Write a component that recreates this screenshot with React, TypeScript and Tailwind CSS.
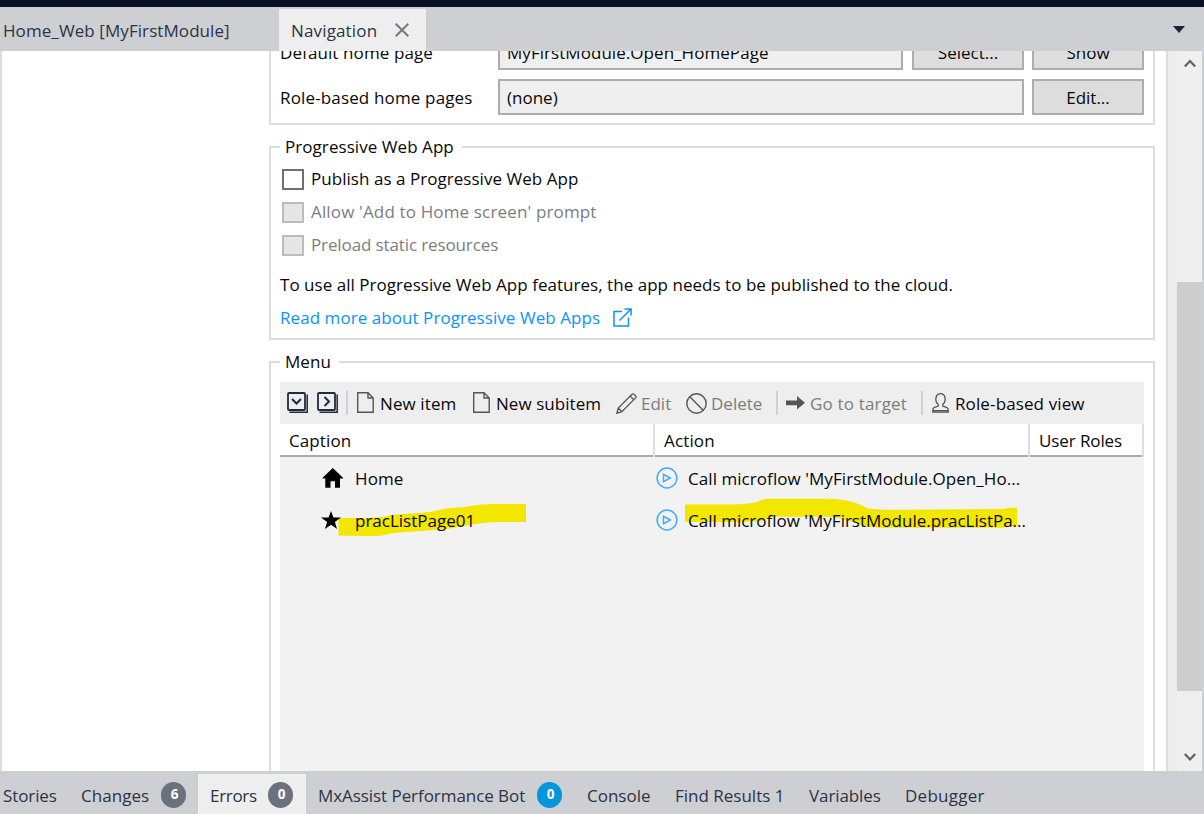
import type { ReactNode } from 'react';

interface GroupBoxProps {
  title?: string;
  className?: string;
  children: ReactNode;
}

function GroupBox({ title, className = '', children }: GroupBoxProps) {
  return (
    <section className={`border-2 border-[#dcdcdc] px-[9px] ${className}`}>
      {title && (
        <h2 className="-mt-[15px] h-[28px] w-fit bg-white pl-[5px] pr-[8px] leading-[28px] tracking-[0.06px]">{title}</h2>
      )}
      {children}
    </section>
  );
}

function Field({ className, children }: { className: string; children: ReactNode }) {
  return (
    <div className={`h-9 border-2 border-[#abadb3] bg-[#efefef] pl-[7px] leading-[34px] ${className}`}>
      {children}
    </div>
  );
}

function PushButton({ children }: { children: ReactNode }) {
  return (
    <button className="h-9 w-28 border-2 border-[#adadad] bg-[#dddddd] pt-px leading-[32px]">{children}</button>
  );
}

function CheckRow({ label, disabled, className = '' }: { label: string; disabled?: boolean; className?: string }) {
  return (
    <label className={`flex h-[33px] items-center pl-[2px] ${disabled ? 'text-[#7d7d7d]' : ''}`}>
      <span
        className={`mr-[7px] h-[21px] w-[22px] border-2 ${
          disabled ? 'border-[#bcbcbc] bg-[#e6e6e6]' : 'border-[#707070] bg-white'
        }`}
      />
      <span className={`-mt-px ${className}`}>{label}</span>
    </label>
  );
}

function StackIcon({ d }: { d: string }) {
  return (
    <svg width="22" height="22" viewBox="0 0 22 22" fill="none" stroke="#222b3d">
      <rect x="1" y="1" width="17" height="17" rx="1" strokeWidth="1.8" />
      <path d="M20.2 2.5V20.2H2.5" strokeWidth="1.5" />
      <path d={d} strokeWidth="2" />
    </svg>
  );
}

function PageIcon() {
  return (
    <svg className="-mt-px" width="17" height="21" viewBox="0 0 17 21" fill="none" stroke="#555" strokeWidth="1.4">
      <path d="M.7.7H11L16.2 6V20.3H.7ZM11 .7V6H16.2" />
    </svg>
  );
}

function PlayIcon() {
  return (
    <svg className="-mt-[2px] shrink-0" width="22" height="22" viewBox="0 0 22 22" fill="none" stroke="#41adf7">
      <circle cx="11" cy="11" r="9.9" strokeWidth="1.5" />
      <path d="M7.5 7.3V14.7L14.3 11Z" strokeWidth="1.5" />
    </svg>
  );
}

function Badge({ count, className }: { count: number; className: string }) {
  return (
    <span
      className={`-mt-[2px] flex h-[26px] w-[25px] items-center justify-center rounded-full pb-px pl-[2px] text-[13.5px] font-bold text-white ${className}`}
    >
      {count}
    </span>
  );
}

function Separator() {
  return <span className="h-6 w-[2px] bg-[#cfd0d4]" />;
}

function TabBar() {
  return (
    <header className="flex h-11 items-end bg-[#cecfd3] text-[#2c3344]">
      <div className="h-[42px] w-[279px] pl-[3px] leading-[43px] tracking-[0.08px]">Home_Web [MyFirstModule]</div>
      <div className="flex h-[42px] w-[147px] items-center bg-[#eeeeee] pl-3">
        <span className="mt-[2px] w-[104px] tracking-[0.15px]">Navigation</span>
        <svg width="14" height="14" viewBox="0 0 14 14" stroke="#747983" strokeWidth="2">
          <path d="M.7.7 13.3 13.3M13.3.7.7 13.3" />
        </svg>
      </div>
      <svg className="mb-[18px] ml-auto mr-[19px]" width="12" height="7" viewBox="0 0 12 7">
        <path d="M0 0H12L6 7Z" fill="#1c2436" />
      </svg>
    </header>
  );
}

function MenuToolbar() {
  return (
    <div className="flex h-[42px] items-center bg-[#eeeeee] pl-[7px]">
      <StackIcon d="M5 7 9.5 11.5 14 7" />
      <span className="w-2" />
      <StackIcon d="M7.5 5 12 9.5 7.5 14" />
      <span className="w-[7px]" />
      <Separator />
      <div className="ml-[9px] flex w-[116px] items-center gap-[6px]">
        <PageIcon />
        <span className="mt-[2px] tracking-[0.1px]">New item</span>
      </div>
      <div className="flex w-[143px] items-center gap-[6px]">
        <PageIcon />
        <span className="mt-[2px] tracking-[0.05px]">New subitem</span>
      </div>
      <div className="flex w-[70px] items-center gap-[4px] text-[#7d7d7d]">
        <svg width="21" height="21" viewBox="0 0 21 21" fill="none" stroke="#555" strokeWidth="1.3">
          <path d="M.8 20.2 2.3 15 16 1.3Q17 .4 18 1.3L19.6 2.9Q20.5 3.9 19.6 4.9L5.9 18.6ZM14.2 3.1 17.8 6.7M2.3 15 5.9 18.6" />
        </svg>
        <span className="mt-[2px]">Edit</span>
      </div>
      <div className="flex w-[90px] items-center gap-[4px] text-[#7d7d7d]">
        <svg width="21" height="21" viewBox="0 0 21 21" fill="none" stroke="#555" strokeWidth="1.4">
          <circle cx="10.5" cy="10.5" r="9.7" />
          <path d="M3.6 3.6 17.4 17.4" />
        </svg>
        <span className="mt-[2px]">Delete</span>
      </div>
      <Separator />
      <div className="ml-[8px] flex w-[135px] items-center gap-[5px] text-[#7d7d7d]">
        <svg width="19" height="14" viewBox="0 0 19 14" fill="#555">
          <path d="M0 4.5H11V0L19 6.7 11 13.5V9.2H0Z" />
        </svg>
        <span className="mt-[2px] whitespace-nowrap tracking-[0.17px]">Go to target</span>
      </div>
      <Separator />
      <div className="ml-[9px] flex items-center gap-[6px]">
        <svg className="-mt-px" width="17" height="20" viewBox="0 0 17 20" fill="none" stroke="#555" strokeWidth="1.3">
          <path d="M6.2 11.3C2.4 8 3.3.7 8.5.7S14.6 8 10.8 11.3V13L15 14.6Q16.2 15.2 16.2 17V19.2H.8V17Q.8 15.2 2 14.6L6.2 13ZM.8 17.6H16.2" />
        </svg>
        <span className="mt-[2px] tracking-[0.12px]">Role-based view</span>
      </div>
    </div>
  );
}

function MenuTable() {
  return (
    <>
      <div className="flex h-[33px] gap-[2px] bg-[#dedede] pr-[2px] leading-[33px]">
        <div className="w-[373px] border-b-2 border-[#ababab] bg-white pl-[9px] tracking-[0.1px]">Caption</div>
        <div className="w-[373px] border-b-2 border-[#ababab] bg-white pl-[9px] tracking-[0.15px]">Action</div>
        <div className="w-[112px] border-b-2 border-[#ababab] bg-white pl-[9px] tracking-[-0.1px]">User Roles</div>
      </div>
      <div className="relative isolate h-[400px] bg-[#f2f2f2] pt-px">
        {/* highlighter strokes under the second row */}
        <svg className="absolute left-0 top-0 -z-10" width="864" height="100" viewBox="280 457 864 100" fill="#f3e600">
          <path d="M338.5 518H366Q381 518 391 515L425 512.5Q437 511 445 508.5L465 507Q479 504 493 504H526V522H498Q484 522 471 524.5Q450 529 435 530L400 532.5Q390 533 385 535Q380 536 370 536L338.5 535.5Z" />
          <path d="M685 504.5H733Q748 504 757 502Q762 499 768 498.7H827Q842 499 853 502Q862 505 868 508.5Q880 510 900 509.7L1003 509 1009 507.7H1017V525.7Q1010 526 1003 527.7H880Q867 527 858 524Q840 517 825 516.7H775Q768 517 763 521Q745 522 733 522H685Z" />
        </svg>
        <div className="flex h-[42px] items-center pl-[42px]">
          <svg className="-mt-[2px]" width="21" height="20" viewBox="0 0 21 20">
            <path d="M10.8 0 21 9.7V10.5H18V19.8H13V13.2H8.5V19.8H3.3V10.5H.6V9.7Z" />
          </svg>
          <span className="ml-3 w-[301px] tracking-[0.1px]">Home</span>
          <PlayIcon />
          <span className="ml-[10px] tracking-[0.06px]">Call microflow 'MyFirstModule.Open_Ho...</span>
        </div>
        <div className="flex h-[42px] items-center pl-[41px]">
          <svg className="-mt-[2px]" width="20" height="18" viewBox="0 0 20 18">
            <path d="M10 0 12.4 6.6H20L13.9 11 16.1 18 10 13.8 3.9 18 6.1 11 0 6.6H7.6Z" />
          </svg>
          <span className="ml-[14px] w-[301px]">pracListPage01</span>
          <PlayIcon />
          <span className="ml-[10px]">Call microflow 'MyFirstModule.pracListPa...</span>
        </div>
      </div>
    </>
  );
}

function ScrollBar() {
  return (
    <div className="flex w-9 shrink-0 border-l-2 border-[#dcdcdc] bg-[#ececec] pl-[9px]">
      <div className="flex w-[25px] flex-col items-center bg-[#efefef]">
        <svg className="mt-[8px]" width="12" height="9" viewBox="0 0 12 9" fill="none" stroke="#606060" strokeWidth="2.2">
          <path d="M.8 7.5 6 2 11.2 7.5" />
        </svg>
        <div className="mt-[214px] h-[409px] w-full bg-[#cdcdcd]" />
        <svg className="mt-[62px]" width="12" height="9" viewBox="0 0 12 9" fill="none" stroke="#606060" strokeWidth="2.2">
          <path d="M.8 1 6 6.5 11.2 1" />
        </svg>
      </div>
    </div>
  );
}

function StatusBar() {
  return (
    <footer className="flex h-[43px] items-end bg-[#cecfd3] pl-[3px] text-[#2c3344] *:h-10 *:shrink-0 *:pt-[3px]">
      <div className="flex w-[78px] items-center tracking-[-0.1px]">Stories</div>
      <div className="flex w-[117px] items-center">
        <span className="w-20 tracking-[0.05px]">Changes</span>
        <Badge count={6} className="bg-[#6c717e]" />
      </div>
      <div className="flex w-[108px] items-center bg-[#eeeeee] pl-3">
        <span className="w-[58px] tracking-[-0.3px]">Errors</span>
        <Badge count={0} className="bg-[#6c717e]" />
      </div>
      <div className="flex w-[281px] items-center pl-3">
        <span className="w-[219px] whitespace-nowrap tracking-[-0.06px]">MxAssist Performance Bot</span>
        <Badge count={0} className="bg-[#0595db]" />
      </div>
      <div className="flex w-[88px] items-center">Console</div>
      <div className="flex w-[134px] items-center">Find Results 1</div>
      <div className="flex w-24 items-center tracking-[-0.1px]">Variables</div>
      <div className="flex items-center tracking-[0.25px]">Debugger</div>
    </footer>
  );
}

export default function App() {
  return (
    <div className="flex h-[814px] w-[1204px] flex-col overflow-hidden bg-white font-['Open_Sans',sans-serif] text-[17px] text-[#080808]">
      <div className="h-[7px] shrink-0 bg-[#0a1124]" />
      <TabBar />
      <main className="flex h-[720px] border-x-2 border-l-[#dcdcdc] border-r-[#cecfd3]">
        <div className="h-full grow overflow-hidden pl-[267px] pr-[11px]">
          {/* scrolled partly under the tab bar */}
          <GroupBox className="-mt-[19px] h-[93px] border-t-0 pt-[2px]">
            <div className="flex items-center">
              <span className="mt-[2px] w-[218px] tracking-[0.1px]">Default home page</span>
              <Field className="mr-[9px] w-[405px] tracking-[0.05px]">MyFirstModule.Open_HomePage</Field>
              <PushButton>Select...</PushButton>
              <span className="w-2" />
              <PushButton>Show</PushButton>
            </div>
            <div className="mt-[9px] flex items-center">
              <span className="mt-[2px] w-[218px] tracking-[0.15px]">Role-based home pages</span>
              <Field className="mr-2 w-[526px]">(none)</Field>
              <PushButton>Edit...</PushButton>
            </div>
          </GroupBox>

          <GroupBox title="Progressive Web App" className="mt-[21px] h-[194px]">
            <div className="mt-[2px]">
              <CheckRow label="Publish as a Progressive Web App" className="tracking-[0.04px]" />
              <CheckRow label="Allow 'Add to Home screen' prompt" className="tracking-[0.15px]" disabled />
              <CheckRow label="Preload static resources" className="tracking-[-0.12px]" disabled />
            </div>
            <p className="mt-[6px] leading-[33px] tracking-[0.035px]">
              To use all Progressive Web App features, the app needs to be published to the cloud.
            </p>
            <a className="flex h-[33px] items-center gap-[13px] text-[#0a94fa]">
              <span className="tracking-[0.06px]">Read more about Progressive Web Apps</span>
              <svg className="-mt-px" width="19" height="19" viewBox="0 0 19 19" fill="none" stroke="currentColor" strokeWidth="1.5">
                <path d="M9 3.5H1V18H15.5V9.5M6.5 12.5 18 1M11.5 .9H18.1V7.5" />
              </svg>
            </a>
          </GroupBox>

          <GroupBox title="Menu" className="mt-[21px]">
            <div className="mt-[6px]">
              <MenuToolbar />
              <MenuTable />
            </div>
          </GroupBox>
        </div>
        <ScrollBar />
      </main>
      <StatusBar />
    </div>
  );
}
